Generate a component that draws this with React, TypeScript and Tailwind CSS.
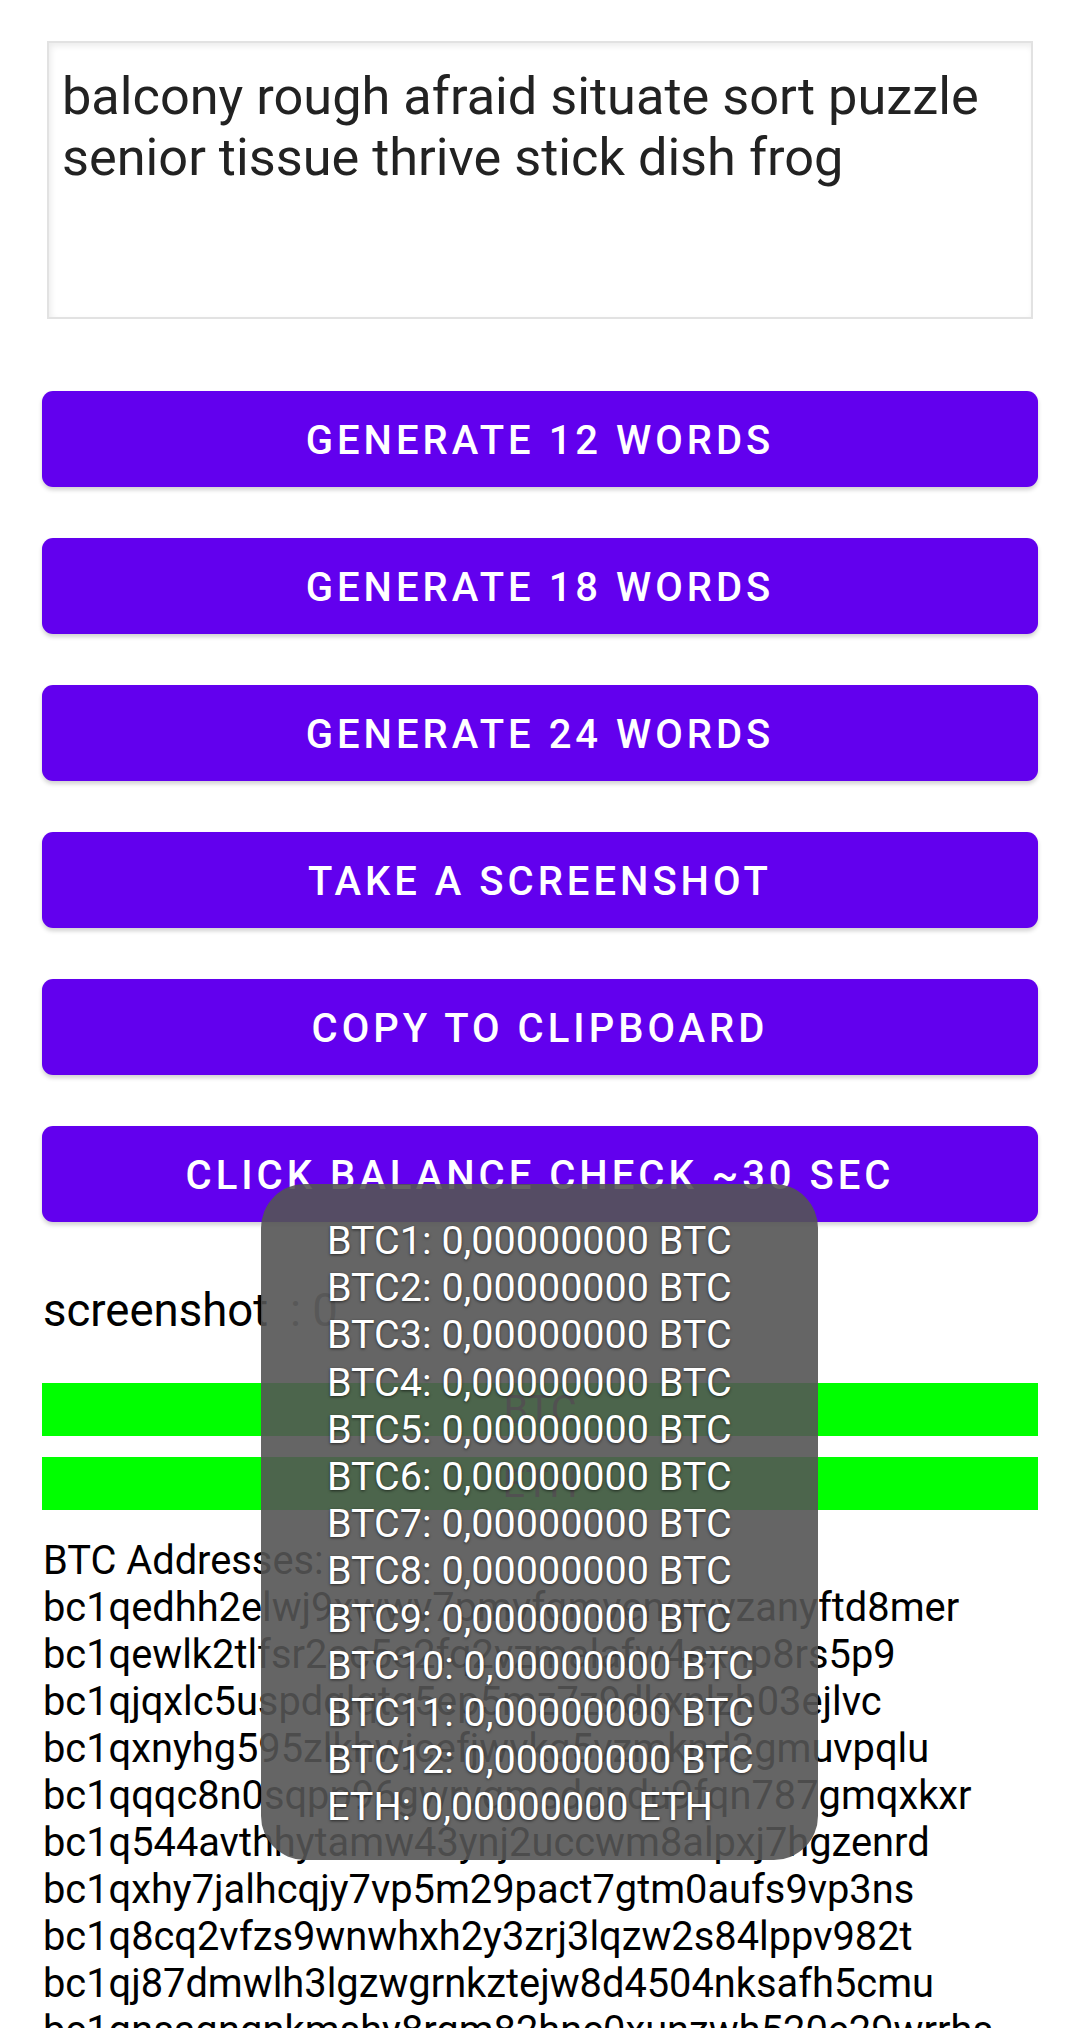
import React from "react"

const buttons = [
  "Generate 12 words",
  "Generate 18 words",
  "Generate 24 words",
  "Take a screenshot",
  "Copy to clipboard",
  "Click balance check ~30 sec",
]

const addresses = [
  "bc1qedhh2elwj9xwwv7pmvfqmvengwyzanyftd8mer",
  "bc1qewlk2tlfsr2ac5e2fq2vzmalafw4exnp8rs5p9",
  "bc1qjqxlc5uspdqlqtq5ep5mz7z9dkxnlzh03ejlvc",
  "bc1qxnyhg595zlkhwjcefjwvkq5vzmknd3gmuvpqlu",
  "bc1qqqc8n0sqpp96gwrvqmsdqndu9fqn787gmqxkxr",
  "bc1q544avthhytamw43ynj2uccwm8alpxj7hgzenrd",
  "bc1qxhy7jalhcqjy7vp5m29pact7gtm0aufs9vp3ns",
  "bc1q8cq2vfzs9wnwhxh2y3zrj3lqzw2s84lppv982t",
  "bc1qj87dmwlh3lgzwgrnkztejw8d4504nksafh5cmu",
  "bc1qnsaqnqnkmshy8rgm82hnc0xunzwh520e29wrrhs",
]

const balances = [
  ...Array.from({ length: 12 }, (_, i) => `BTC${i + 1}: 0,00000000 BTC`),
  "ETH: 0,00000000 ETH",
]

export default function App() {
  return (
    <div className="relative w-[1080px] h-[2028px] overflow-hidden bg-white font-['Roboto',sans-serif]">
      {/* mnemonic box */}
      <div className="ml-[47px] mt-[41px] w-[986px] h-[278px] border-2 border-[#e2e2e2] shadow-[inset_2px_3px_6px_rgba(0,0,0,0.08)] pl-[13px] pt-[23px] pr-[10px]">
        <p className="text-[52.3px] leading-[61px] text-[#222222]">
          balcony rough afraid situate sort puzzle senior tissue thrive stick dish frog
        </p>
      </div>

      {/* buttons */}
      <div className="flex flex-col gap-[51px] px-[42px] mt-[72px]">
        {buttons.map((b) => (
          <button
            key={b}
            className="h-[96px] w-full pt-[3px] rounded-[11px] bg-[#6200ee] text-white uppercase font-medium text-[40px] tracking-[0.1em] shadow-[0_3px_4px_rgba(0,0,0,0.18)]"
          >
            {b}
          </button>
        ))}
      </div>

      {/* screenshot counter */}
      <div className="flex items-baseline px-[43px] mt-[62px] text-[45.5px] leading-[54px] text-black">
        <span>screenshot</span>
        <span className="ml-[22px] text-[#777777]">: 0</span>
      </div>

      {/* status bars */}
      <div className="flex flex-col gap-[21px] px-[42px] mt-[45px]">
        <div className="h-[53px] bg-[#00ff00] flex items-center justify-center text-[39.7px] text-[#333333]">BTC</div>
        <div className="h-[53px] bg-[#00ff00] flex items-center justify-center text-[39.7px] text-[#333333]">ETH</div>
      </div>

      {/* addresses */}
      <div className="px-[43px] mt-[27px] text-[39.8px] leading-[47px] text-black">
        <div>BTC Addresses:</div>
        {addresses.map((a) => (
          <div key={a}>{a}</div>
        ))}
      </div>

      {/* toast */}
      <div className="absolute left-[261px] top-[1184px] w-[557px] rounded-[44px] bg-[rgba(84,84,84,0.9)] pl-[66px] pt-[33px] pb-[29px]">
        {balances.map((l) => (
          <div
            key={l}
            className="text-[39.5px] leading-[47.2px] text-white whitespace-nowrap [text-shadow:0_1px_3px_rgba(0,0,0,0.6)]"
          >
            {l}
          </div>
        ))}
      </div>
    </div>
  )
}
